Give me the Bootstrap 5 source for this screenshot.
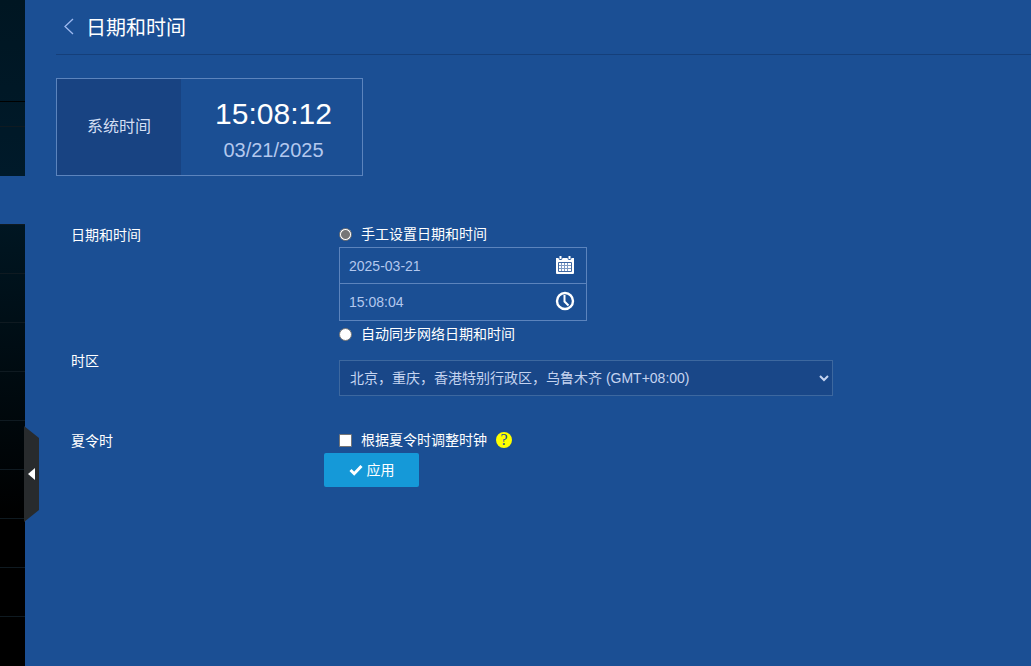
<!DOCTYPE html>
<html lang="zh-CN">
<head>
<meta charset="utf-8">
<meta name="viewport" content="width=device-width, initial-scale=1">
<title>日期和时间</title>
<link href="https://cdn.jsdelivr.net/npm/bootstrap@5.3.0/dist/css/bootstrap.min.css" rel="stylesheet">
<style>
  :root { --line: #5c84bd; --soft: #b3c8ee; }
  body { background: #1b4f94; color: #fff; font: 14px/26px "Liberation Sans", "Noto Sans CJK SC", sans-serif; }
  .side { width: 25px; background: linear-gradient(#001622, #001a2a 176px, #001622 224px, #000 520px); }
  .side a { display: block; height: 49px; border-top: 1px solid #0f1a21; }
  .side .brand { height: 101px; border: 0; }
  .side .user { height: 25px; border-color: #000; }
  .side .group { height: 50px; }
  .side .current { height: 48px; background: #1b4f94; border-color: #1b4f94; }
  .collapse-tab { top: 426px; left: 24px; width: 15px; height: 96px; background: #282b2d; clip-path: polygon(0 0, 100% 12px, 100% 84px, 0 100%); }
  main { padding-left: 31px; }
  .page-title { height: 55px; border-bottom: 1px solid #153f7a; }
  .page-title h1 { font-size: 20px; line-height: 28px; padding-top: 1px; }
  .clock-box { width: 307px; height: 98px; margin-top: 23px; border: 1px solid var(--line); }
  .clock-name { width: 124px; background: #184382; color: #d3def3; font-size: 16px; }
  .clock-face { padding: 10px 0 0 4px; }
  .clock-time { font-size: 30px; line-height: 36px; }
  .clock-date { font-size: 20px; line-height: 36px; color: var(--soft); }
  form { margin-top: 45px; }
  .line { padding-left: 15px; }
  .line-name { width: 268px; line-height: 28px; }
  .choice { height: 26px; }
  .choice input { width: 13px; height: 13px; margin: 0 9px 0 0; }
  .choice input[type=radio] { appearance: none; border: 1px solid #767676; border-radius: 50%; background: #fff; }
  .choice input[type=radio]:checked { background: radial-gradient(circle, #767676 4px, #fff 5px); }
  .choice input[type=checkbox] { appearance: none; border: 1px solid #767676; border-radius: 1px; background: #fff; }
  .choice input[type=checkbox]:checked { background: #1599d8; }
  .pickers { width: 248px; height: 74px; border: 1px solid var(--line); }
  .picker { height: 35px; padding: 0 11px 0 9px; }
  .picker + .picker { height: 37px; border-top: 1px solid var(--line); }
  .picker input { min-width: 0; border: 0; padding: 0; background: none; color: var(--soft); outline: 0; }
  .picker button { width: 20px; height: 20px; padding: 0; margin-bottom: 2px; border: 0; background: none; color: #fff; line-height: 0; }
  .zone { margin-top: 13px; width: 494px; max-width: 100%; }
  .zone select { appearance: none; width: 100%; height: 36px; padding: 0 30px 0 10px; border: 1px solid #3d689f; border-radius: 0; background: #194788; color: #c5d4f0; font-size: 14px; }
  .zone svg { right: 4px; top: 14px; pointer-events: none; }
  .saving { height: 26px; margin-top: 31px; }
  .help { width: 16px; height: 16px; margin-left: 9px; border-radius: 50%; background: #ff0; color: #1b4f94; font: 16px/16px "Liberation Serif", serif; text-decoration: none; text-align: center; }
  .apply { width: 95px; height: 34px; margin-left: 268px; border-radius: 2px; background: #1599d8; color: #fff; font-size: 14px; }
  .apply:hover { background: #1187c0; color: #fff; }
</style>
</head>
<body>
<div class="d-flex min-vh-100 position-relative">
  <nav class="side flex-shrink-0" aria-label="主菜单">
    <a class="brand" href="#"></a><a class="user" href="#"></a><a class="group" href="#"></a><a class="current" href="#"></a>
    <a href="#"></a><a href="#"></a><a href="#"></a><a href="#"></a><a href="#"></a><a href="#"></a><a href="#"></a><a href="#"></a><a href="#"></a>
  </nav>
  <button type="button" class="collapse-tab position-absolute border-0 p-0 d-flex align-items-center justify-content-center" aria-label="收起菜单">
    <svg width="7" height="12" viewBox="0 0 7 12"><path d="M7 0v12L0 6z" fill="#fff"/></svg>
  </button>
  <main class="flex-grow-1">
    <header class="page-title d-flex align-items-center">
      <a class="d-flex ms-2 me-2" href="#" aria-label="返回"><svg width="14" height="18" viewBox="0 0 14 18" fill="none" stroke="#9db9f0" stroke-width="1.3"><path d="M9 1L1 8.500 9 16"/></svg></a>
      <h1 class="m-0 fw-normal">日期和时间</h1>
    </header>
    <section class="clock-box d-flex">
      <div class="clock-name d-flex align-items-center justify-content-center">系统时间</div>
      <div class="clock-face flex-grow-1 d-flex flex-column justify-content-center text-center">
        <div class="clock-time">15:08:12</div>
        <div class="clock-date">03/21/2025</div>
      </div>
    </section>
    <form>
      <div class="line d-flex">
        <div class="line-name flex-shrink-0">日期和时间</div>
        <div>
          <div class="choice d-flex align-items-center"><input type="radio" name="mode" id="manual" checked><label for="manual">手工设置日期和时间</label></div>
          <div class="pickers">
            <div class="picker d-flex align-items-center">
              <input class="flex-grow-1" type="text" value="2025-03-21" aria-label="日期">
              <button type="button" aria-label="选择日期">
                <svg width="20" height="20" viewBox="0 0 20 20"><path fill="#fff" d="M1 3h2.500a2 2 0 0 0 4 0h5a2 2 0 0 0 4 0H19v15a1 1 0 0 1-1 1H2a1 1 0 0 1-1-1z"/><path d="M5.500 1v3M14.500 1v3" stroke="#fff" stroke-width="2"/><path fill="none" stroke="#3e67a2" d="M3.500 7.500h13v9h-13z"/><path fill="none" stroke="#7d9ac4" d="M4 10.500h12M4 13.500h12M6.500 8v8M9.500 8v8M12.500 8v8"/></svg>
              </button>
            </div>
            <div class="picker d-flex align-items-center">
              <input class="flex-grow-1" type="text" value="15:08:04" aria-label="时间">
              <button type="button" aria-label="选择时间">
                <svg width="20" height="20" viewBox="0 0 20 20" fill="none" stroke="#fff" stroke-width="2.400"><circle cx="10" cy="10" r="8"/><path d="M9.500 4v6.500l4 4" stroke-width="2"/></svg>
              </button>
            </div>
          </div>
          <div class="choice d-flex align-items-center"><input type="radio" name="mode" id="auto"><label for="auto">自动同步网络日期和时间</label></div>
        </div>
      </div>
      <div class="line d-flex">
        <label class="line-name flex-shrink-0" for="zone">时区</label>
        <div class="zone position-relative">
          <select id="zone"><option>北京，重庆，香港特别行政区，乌鲁木齐 (GMT+08:00)</option></select>
          <svg class="position-absolute" width="10" height="8" viewBox="0 0 10 8" fill="none" stroke="#c5d4f0" stroke-width="2"><path d="M1 2l4 4 4-4"/></svg>
        </div>
      </div>
      <div class="line saving d-flex">
        <div class="line-name flex-shrink-0">夏令时</div>
        <div class="choice d-flex align-items-center"><input type="checkbox" id="dst"><label for="dst">根据夏令时调整时钟</label><a class="help" href="#" aria-label="帮助">?</a></div>
      </div>
      <button type="button" class="apply btn border-0 p-0 d-flex align-items-center justify-content-center">
        <svg class="me-1" width="14" height="12" viewBox="0 0 14 12"><path d="M1.500 6l3.700 3.700L12.500 2" fill="none" stroke="#fff" stroke-width="3"/></svg>应用
      </button>
    </form>
  </main>
</div>
<script src="https://cdn.jsdelivr.net/npm/bootstrap@5.3.0/dist/js/bootstrap.bundle.min.js"></script>
</body>
</html>
